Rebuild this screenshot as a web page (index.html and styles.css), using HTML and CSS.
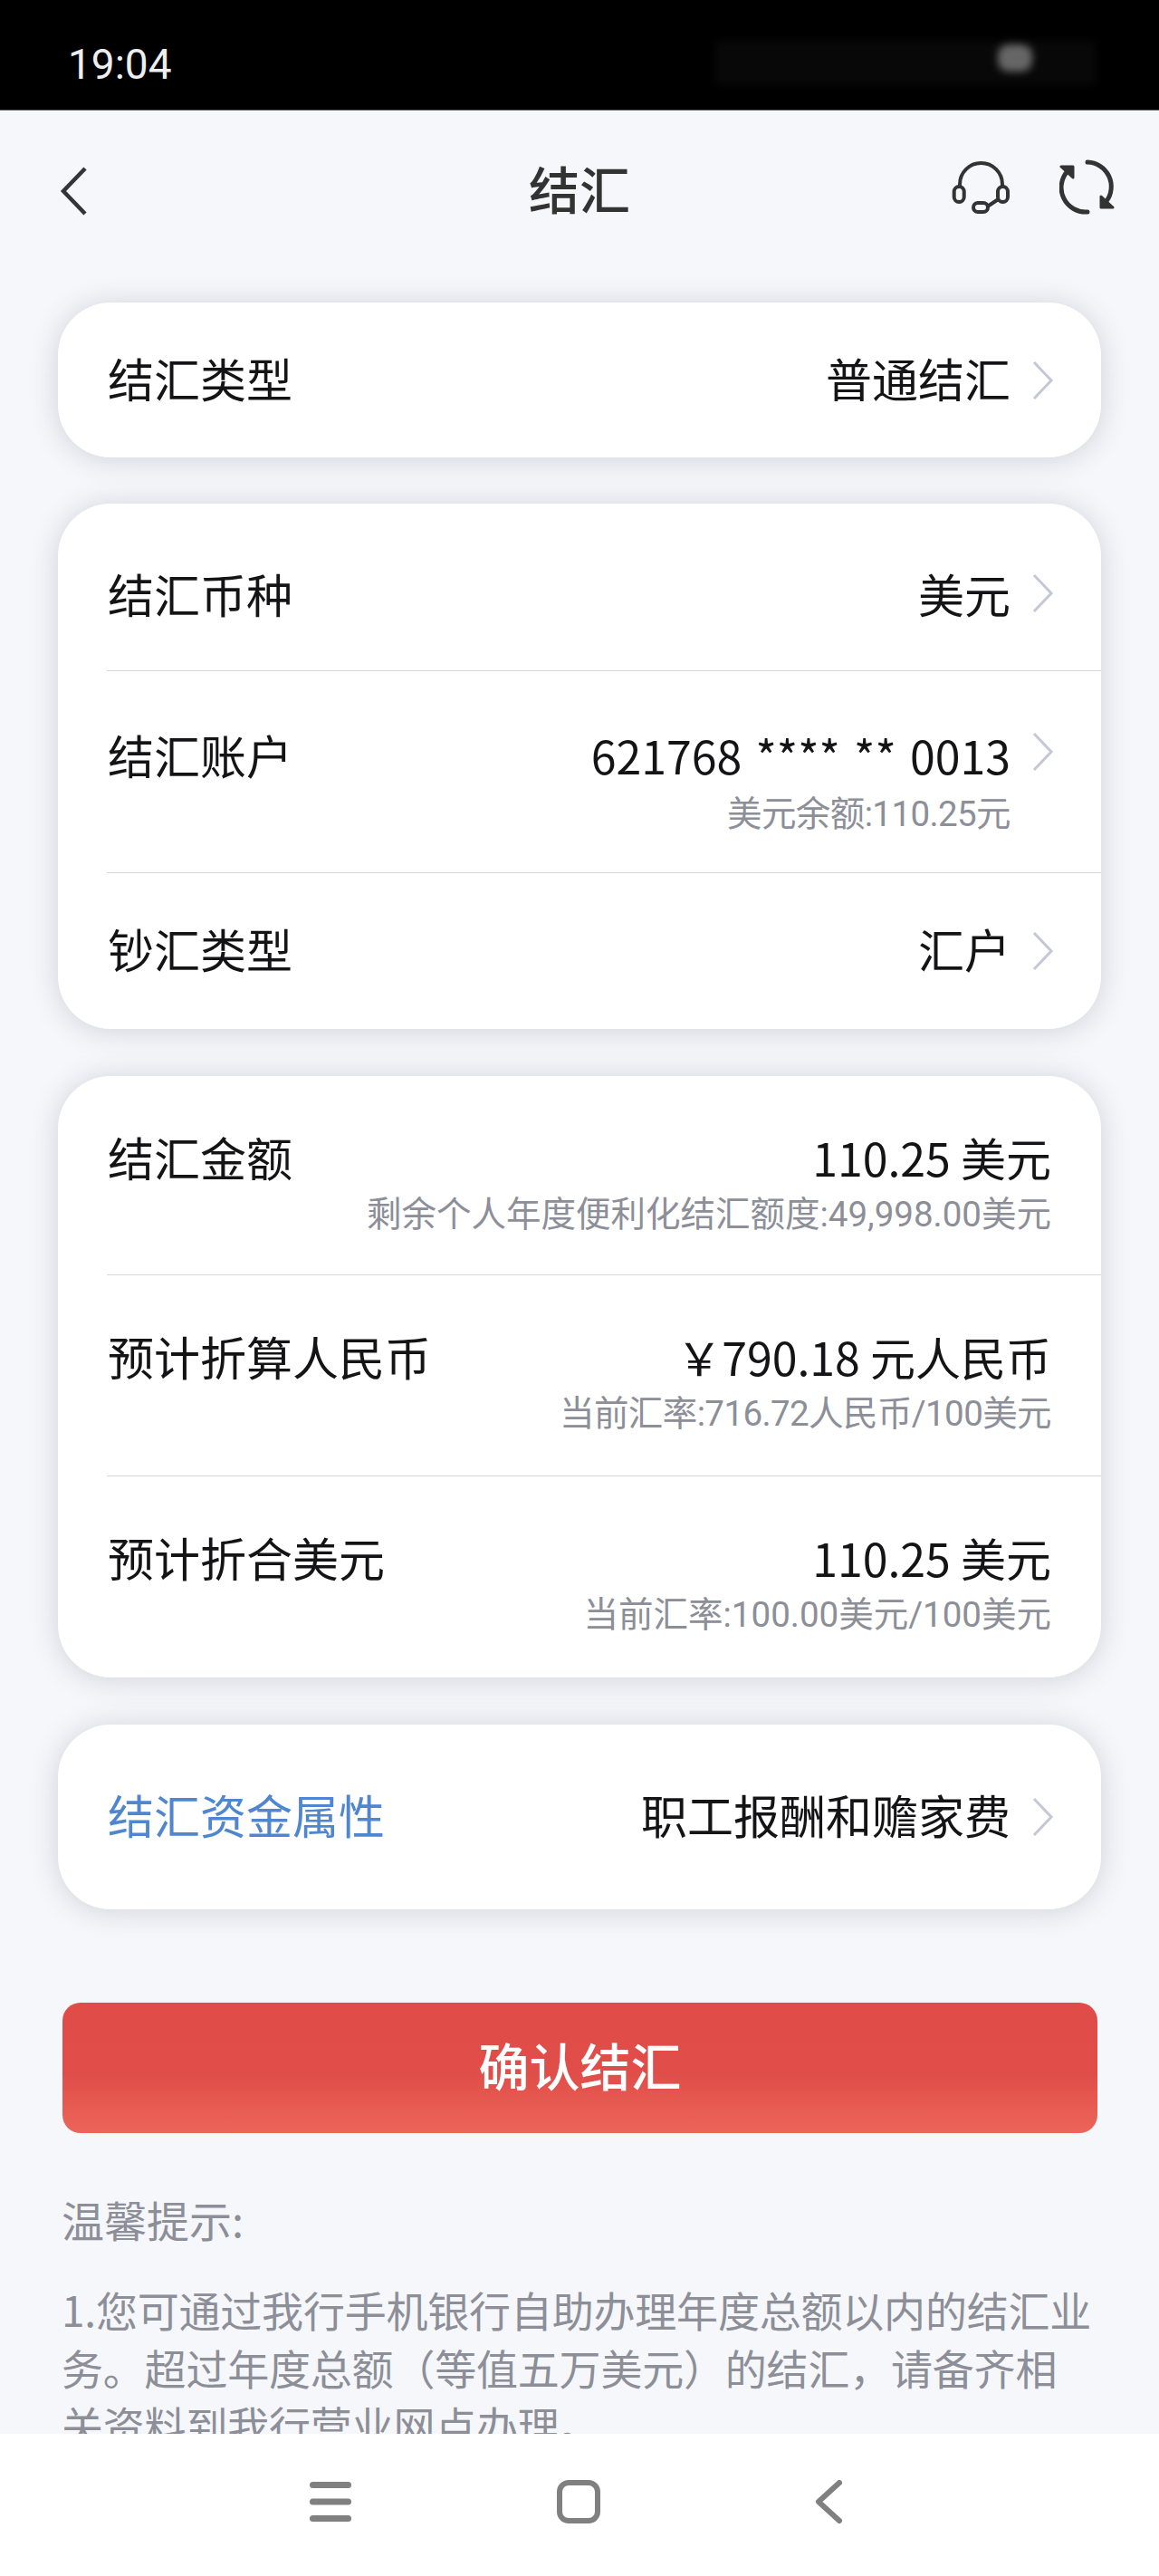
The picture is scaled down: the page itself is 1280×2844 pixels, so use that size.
FILE: index.html
```html
<!DOCTYPE html>
<html lang="zh-CN">
<head>
    <meta charset="UTF-8">
    <title>结汇</title>
    <link rel="stylesheet" href="styles.css">
</head>
<body>
    <div class="status-bar">
        <span class="time">19:04</span>
        <div class="status-blur"><div class="status-dot"></div></div>
    </div>

    <div class="nav-bar">
        <svg class="nav-back" width="30" height="54" viewBox="0 0 30 54"><path d="M28 2 L4 27 L28 52" fill="none" stroke="#33343a" stroke-width="4.5"/></svg>
        <h1 class="nav-title">结汇</h1>
        <div class="nav-icons">
            <svg width="64" height="60" viewBox="0 0 64 60" fill="none" stroke="#333" stroke-width="4" stroke-linecap="round">
                <path d="M9 30 V27.5 A23.5 23.5 0 0 1 56 27.5 V30"/>
                <rect x="2.7" y="30" width="11" height="17" rx="5.5"/>
                <rect x="51" y="30" width="11" height="17" rx="5.5"/>
                <rect x="24" y="48" width="16" height="10" rx="5"/>
                <path d="M41 51 L50 45"/>
            </svg>
            <svg width="62" height="62" viewBox="0 0 62 62" fill="none" stroke="#333" stroke-width="5" stroke-linecap="round">
                <path d="M31 3 A27 27 0 0 1 52 46"/>
                <path d="M31 58 A27 27 0 0 1 9 13"/>
                <path d="M2 8 L15 8 L15 20 Z" stroke-linejoin="round" fill="#333" stroke-width="3"/>
                <path d="M46 41 L46 53 L59 53 Z" stroke-linejoin="round" fill="#333" stroke-width="3"/>
            </svg>
        </div>
    </div>

    <div class="content">
        <div class="card card-first">
            <div class="row row-center row-type">
                <span class="label">结汇类型</span>
                <span class="value">普通结汇</span>
                <svg class="arrow" viewBox="0 0 24 44"><path d="M2 2 L21 22 L2 42"/></svg>
            </div>
        </div>

        <div class="card">
            <div class="row row-currency">
                <span class="label">结汇币种</span>
                <span class="value">美元</span>
                <svg class="arrow" viewBox="0 0 24 44"><path d="M2 2 L21 22 L2 42"/></svg>
            </div>
            <div class="row row-account">
                <span class="label">结汇账户</span>
                <div class="value-box">
                    <div class="value card-no">621768 **** ** 0013</div>
                    <div class="sub sub-tight">美元余额:110.25元</div>
                </div>
                <svg class="arrow" viewBox="0 0 24 44"><path d="M2 2 L21 22 L2 42"/></svg>
            </div>
            <div class="row row-center row-cash">
                <span class="label">钞汇类型</span>
                <span class="value">汇户</span>
                <svg class="arrow" viewBox="0 0 24 44"><path d="M2 2 L21 22 L2 42"/></svg>
            </div>
        </div>

        <div class="card">
            <div class="row row-amount row-first">
                <span class="label">结汇金额</span>
                <div class="value-box">
                    <div class="value">110.25 美元</div>
                    <div class="sub">剩余个人年度便利化结汇额度:49,998.00美元</div>
                </div>
            </div>
            <div class="row row-amount">
                <span class="label">预计折算人民币</span>
                <div class="value-box">
                    <div class="value">￥790.18 元人民币</div>
                    <div class="sub sub-tight">当前汇率:716.72人民币/100美元</div>
                </div>
            </div>
            <div class="row row-amount row-last">
                <span class="label">预计折合美元</span>
                <div class="value-box">
                    <div class="value">110.25 美元</div>
                    <div class="sub">当前汇率:100.00美元/100美元</div>
                </div>
            </div>
        </div>

        <div class="card">
            <div class="row row-center row-purpose">
                <span class="label label-link">结汇资金属性</span>
                <span class="value">职工报酬和赡家费</span>
                <svg class="arrow" viewBox="0 0 24 44"><path d="M2 2 L21 22 L2 42"/></svg>
            </div>
        </div>

        <button class="confirm-btn">确认结汇</button>

        <div class="tips">
            <p class="tips-title">温馨提示:</p>
            <p class="tips-text">1.您可通过我行手机银行自助办理年度总额以内的结汇业务。超过年度总额（等值五万美元）的结汇，请备齐相关资料到我行营业网点办理。</p>
        </div>
    </div>

    <div class="bottom-bar">
        <svg width="46" height="44" viewBox="0 0 46 44" fill="#808080">
            <rect x="0" y="0" width="46" height="7" rx="3.5"/>
            <rect x="0" y="18.5" width="46" height="7" rx="3.5"/>
            <rect x="0" y="37" width="46" height="7" rx="3.5"/>
        </svg>
        <svg class="nav-home" width="48" height="48" viewBox="0 0 48 48" fill="none" stroke="#808080" stroke-width="6">
            <rect x="3" y="3" width="42" height="42" rx="10"/>
        </svg>
        <svg width="30" height="48" viewBox="0 0 30 48" fill="none" stroke="#808080" stroke-width="6" stroke-linecap="round" stroke-linejoin="round">
            <path d="M27 3 L4 24 L27 45"/>
        </svg>
    </div>
</body>
</html>
```

FILE: styles.css
```css
* {
    box-sizing: border-box;
}

body {
    margin: 0;
    width: 1280px;
    height: 2844px;
    overflow: hidden;
    position: relative;
    background-color: #f6f7fb;
    font-family: "Noto Sans CJK SC", "Noto Sans", sans-serif;
    color: #141416;
}

.status-bar {
    height: 122px;
    background-color: #000;
    border-bottom: 1px solid #555;
    padding: 47px 70px 0 75px;
    display: flex;
    align-items: flex-start;
    justify-content: space-between;
}

.time {
    font-family: Roboto, sans-serif;
    font-size: 46px;
    line-height: 48px;
    color: #eee;
}

.status-blur {
    width: 420px;
    height: 48px;
    margin-top: -2px;
    padding: 4px 0 0 312px;
    background-color: #080808;
    filter: blur(4px);
}

.status-dot {
    width: 38px;
    height: 30px;
    border-radius: 12px;
    background-color: #666;
}

.nav-bar {
    height: 212px;
    padding: 62px 48px 0 66px;
    display: flex;
    align-items: flex-start;
    justify-content: space-between;
    position: relative;
}

.nav-title {
    margin: 0;
    font-size: 56px;
    line-height: 72px;
    font-weight: 500;
    color: #333;
    position: absolute;
    left: 0;
    right: 0;
    top: 49px;
    text-align: center;
}

.nav-icons {
    display: flex;
    gap: 55px;
    margin-top: -8px;
}

.content {
    padding: 0 64px;
}

.card {
    background-color: #fff;
    border-radius: 58px;
    box-shadow: 0 2px 32px rgba(60, 65, 80, 0.2);
    padding-left: 54px;
    margin-bottom: 52px;
}

.card-first {
    margin-bottom: 51px;
}

.row {
    display: flex;
    align-items: flex-start;
    padding-right: 52px;
}

.row + .row {
    border-top: 1px solid #d6d7da;
}

.row-center {
    align-items: center;
}

.row-center .label,
.row-center .value {
    margin-bottom: 6px;
}

.row-type {
    height: 171px;
}

.row-purpose {
    height: 204px;
}

.row-currency {
    height: 184px;
    padding-top: 14px;
    align-items: center;
}

.row-account {
    height: 223px;
    padding-top: 56px;
}

.row-cash {
    height: 173px;
}

.row-amount {
    height: 222px;
    padding: 53px 55px 0 0;
}

.row-first {
    height: 219px;
}

.row-last {
    height: 223px;
}

.label {
    font-size: 51px;
    line-height: 72px;
    margin-left: 1px;
    margin-right: auto;
}

.label-link {
    color: #4f86cf;
}

.value-box {
    text-align: right;
}

.value {
    font-size: 51px;
    line-height: 72px;
}

.value-box .value {
    font-size: 50px;
}

.card-no {
    word-spacing: 4px;
}

.sub {
    font-family: Roboto, "Noto Sans CJK SC", sans-serif;
    font-size: 38.5px;
    line-height: 46px;
    color: #8c8e98;
    white-space: nowrap;
    margin-top: 5px;
}

.sub-tight {
    letter-spacing: -0.6px;
}

.row-account .sub {
    margin-top: 7px;
}

.arrow {
    width: 24px;
    height: 44px;
    margin-left: 24px;
    flex-shrink: 0;
    fill: none;
    stroke: #c4c7d6;
    stroke-width: 3;
}

.row-account .arrow {
    margin-top: 11px;
}

.confirm-btn {
    display: block;
    width: 1143px;
    height: 144px;
    margin: 103px 0 0 5px;
    padding-bottom: 10px;
    border: 0;
    border-radius: 20px;
    background: linear-gradient(#e04c47 0%, #e04e49 55%, #ec6559 100%);
    color: #fff;
    font-family: inherit;
    font-size: 56px;
    font-weight: 500;
}

.tips {
    width: 1141px;
    margin: 60px 0 0 4px;
    color: #8c8e98;
    font-size: 46px;
}

.tips-title {
    margin: 0 0 33px;
    font-size: 47px;
    line-height: 70px;
}

.tips-text {
    margin: 0;
    line-height: 63.5px;
    letter-spacing: -0.2px;
}

.bottom-bar {
    position: absolute;
    left: 0;
    right: 0;
    bottom: 0;
    height: 157px;
    background-color: #fff;
    padding: 0 0 8px 342px;
    display: flex;
    align-items: center;
    gap: 227px;
}

.nav-home {
    margin-right: 10px;
}
```
